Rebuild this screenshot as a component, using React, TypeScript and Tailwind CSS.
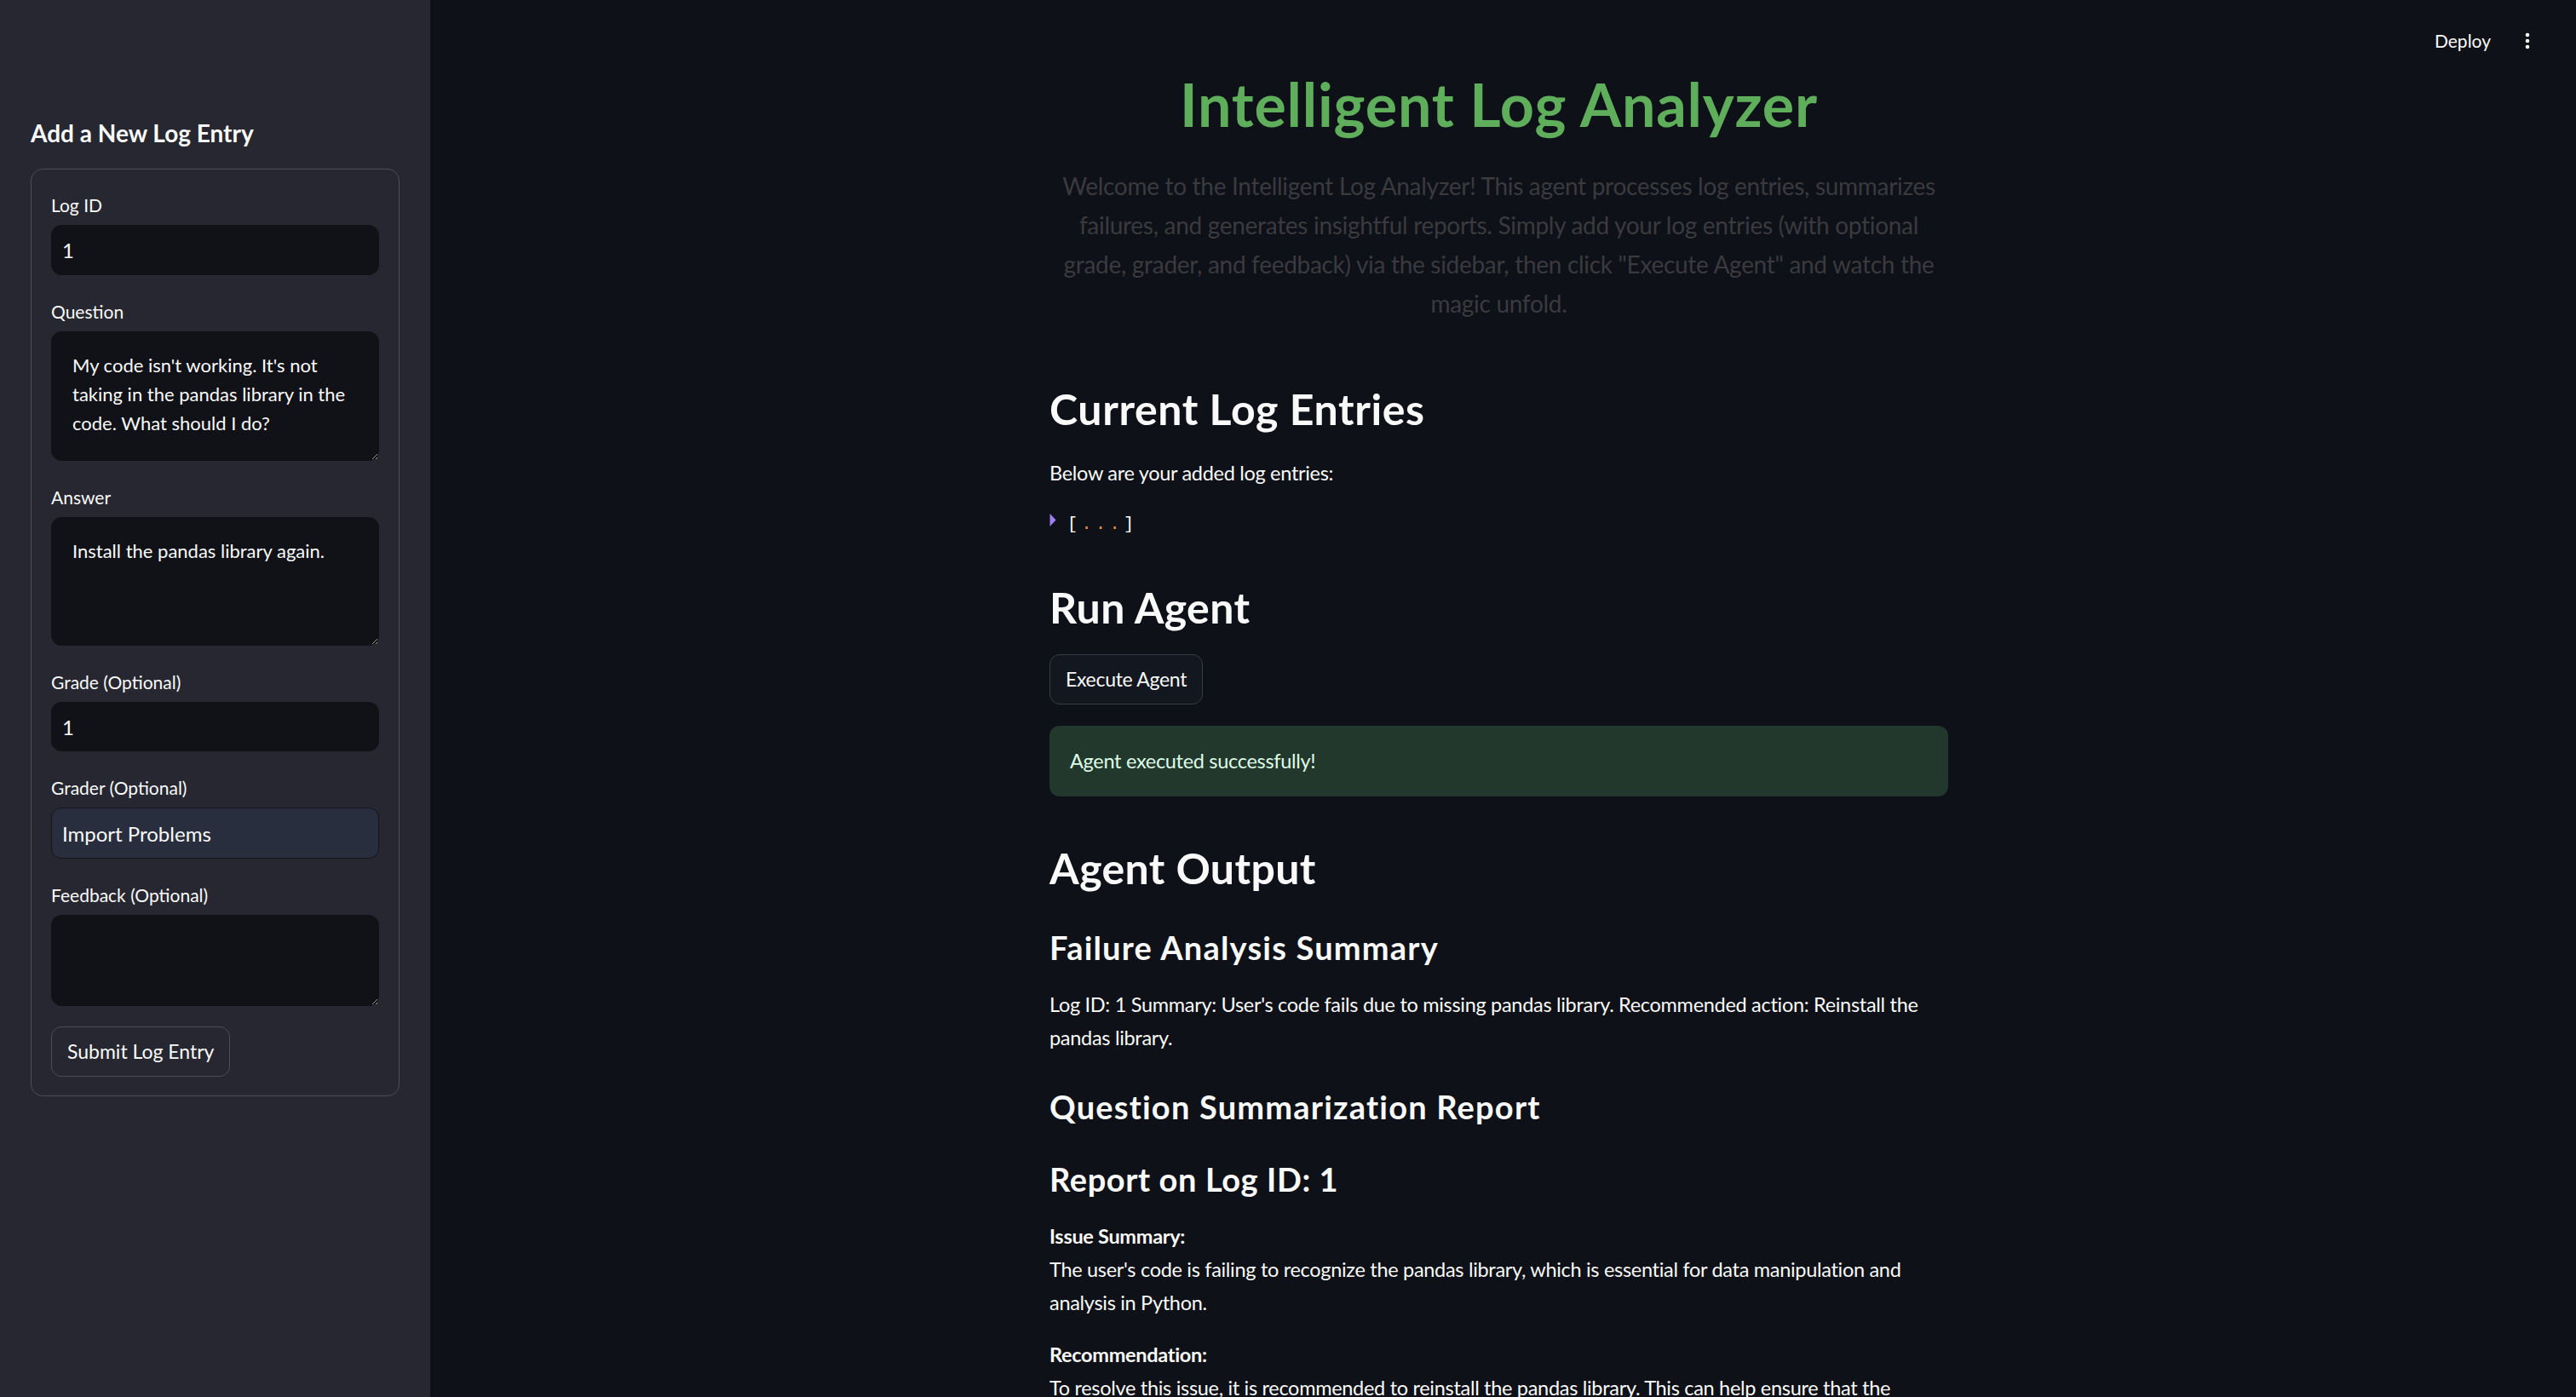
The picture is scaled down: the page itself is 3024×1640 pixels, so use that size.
import React from 'react';
import { EllipsisVertical } from 'lucide-react';

const Field = ({ label, children }: { label: string; children: React.ReactNode }) => (
    <div className="flex flex-col">
        <div className="h-[36px] flex items-center text-[21px] text-[#fafafa] leading-none">{label}</div>
        <div className="mt-[6px]">{children}</div>
    </div>
);

// bg is left out on purpose so each field can pick its own
const inputCls =
    'block w-full rounded-[12px] border px-[12px] text-[24px] text-[#fafafa] outline-none font-[inherit]';
const areaCls =
    'block w-full rounded-[12px] bg-[#111218] border border-[#111218] px-[24px] pt-[22px] text-[22px] leading-[34px] text-[#fafafa] outline-none resize-y font-[inherit]';

const Sidebar = () => (
    <aside className="w-[505px] shrink-0 h-full bg-[#262730] px-[36px] pt-[136px]">
        <h2 className="text-[28px] leading-[40px] font-bold text-[#fafafa]">Add a New Log Entry</h2>
        <div className="mt-[22px] border border-[#4b4c55] rounded-[14px] px-[23px] pt-[23px] pb-[22px] flex flex-col gap-[24px]">
            <Field label="Log ID">
                <input className={`${inputCls} h-[59px] bg-[#111218] border-[#111218]`} defaultValue="1" readOnly />
            </Field>
            <Field label="Question">
                <textarea
                    className={`${areaCls} h-[152px]`}
                    defaultValue="My code isn't working. It's not taking in the pandas library in the code. What should I do?"
                    readOnly
                />
            </Field>
            <Field label="Answer">
                <textarea className={`${areaCls} h-[151px]`} defaultValue="Install the pandas library again." readOnly />
            </Field>
            <Field label="Grade (Optional)">
                <input className={`${inputCls} h-[58px] bg-[#111218] border-[#111218]`} defaultValue="1" readOnly />
            </Field>
            <Field label="Grader (Optional)">
                <input
                    className={`${inputCls} h-[60px] bg-[#282e3d] border-[#14161c]`}
                    defaultValue="Import Problems"
                    readOnly
                />
            </Field>
            <Field label="Feedback (Optional)">
                <textarea className={`${areaCls} h-[107px]`} defaultValue="" readOnly />
            </Field>
            <div>
                <button className="block h-[59px] px-[18px] rounded-[12px] border border-[#4b4c55] bg-[#262730] text-[23px] text-[#fafafa]">
                    Submit Log Entry
                </button>
            </div>
        </div>
    </aside>
);

const Main = () => (
    <main className="relative flex-1 h-full overflow-hidden bg-[#0e1117] pr-[10px]">
        <div className="absolute top-0 right-[45px] h-[96px] flex items-center gap-[31px] text-[#fafafa]">
            <span className="text-[21px]">Deploy</span>
            <EllipsisVertical size={24} strokeWidth={2.6} />
        </div>

        <div className="mx-auto w-[1055px] pt-[82px] text-[#fafafa]">
            <h1 className="text-center text-[70px] leading-[80px] font-bold tracking-[0.8px] text-[#5fae5b]">
                Intelligent Log Analyzer
            </h1>
            <p className="mt-[33px] text-center text-[28px] leading-[46px] tracking-[-0.3px] text-[#3a3a3f]">
                Welcome to the Intelligent Log Analyzer! This agent processes log entries, summarizes failures, and
                generates insightful reports. Simply add your log entries (with optional grade, grader, and feedback)
                via the sidebar, then click "Execute Agent" and watch the magic unfold.
            </p>

            <h2 className="mt-[69px] text-[50px] leading-[64px] font-bold tracking-[0.6px]">Current Log Entries</h2>
            <p className="mt-[24px] text-[23.5px] leading-[39px] tracking-[-0.3px]">Below are your added log entries:</p>
            <div className="mt-[26px] h-[30px] flex items-center font-['Liberation_Mono',monospace] text-[20px]">
                <svg width="8" height="15" viewBox="0 0 8 15" className="mt-[-12px]">
                    <path d="M0.5 0 L7.5 7.5 L0.5 15 Z" fill="#a07ef3" />
                </svg>
                <span className="ml-[13px] tracking-[4.5px]">
                    [<span className="text-[#f2943b]">...</span>]
                </span>
            </div>

            <h2 className="mt-[50px] text-[50px] leading-[64px] font-bold tracking-[0.4px]">Run Agent</h2>
            <button className="block mt-[23px] h-[59px] px-[18px] rounded-[12px] border border-[#3a3c45] bg-[#131720] text-[23px] tracking-[-0.3px] text-[#fafafa]">
                Execute Agent
            </button>
            <div className="mt-[25px] h-[83px] rounded-[12px] bg-[#22382c] px-[24px] flex items-center text-[23.5px] tracking-[-0.3px] text-[#dffde9]">
                Agent executed successfully!
            </div>

            <h2 className="mt-[52px] text-[50px] leading-[64px] font-bold tracking-[0.4px]">Agent Output</h2>
            <h3 className="mt-[37px] text-[38px] leading-[48px] font-bold tracking-[1.2px]">Failure Analysis Summary</h3>
            <p className="mt-[24px] text-[23.5px] leading-[39px] tracking-[-0.3px]">
                Log ID: 1 Summary: User's code fails due to missing pandas library. Recommended action: Reinstall the
                pandas library.
            </p>
            <h3 className="mt-[37px] text-[38px] leading-[48px] font-bold tracking-[1.2px]">
                Question Summarization Report
            </h3>
            <h3 className="mt-[37px] text-[38px] leading-[48px] font-bold tracking-[0.6px]">Report on Log ID: 1</h3>
            <div className="mt-[24px] text-[23.5px] leading-[39px] tracking-[-0.3px]">
                <p className="font-bold">Issue Summary:</p>
                <p>
                    The user's code is failing to recognize the pandas library, which is essential for data manipulation
                    and analysis in Python.
                </p>
                <p className="mt-[22px] font-bold">Recommendation:</p>
                <p>
                    To resolve this issue, it is recommended to reinstall the pandas library. This can help ensure that
                    the library is correctly installed and accessible to your code.
                </p>
            </div>
        </div>
    </main>
);

export default function App() {
    return (
        <div className="flex w-full h-[1640px] overflow-hidden bg-[#0e1117] font-['Source_Sans_Pro','Lato',sans-serif]">
            <Sidebar />
            <Main />
        </div>
    );
}
